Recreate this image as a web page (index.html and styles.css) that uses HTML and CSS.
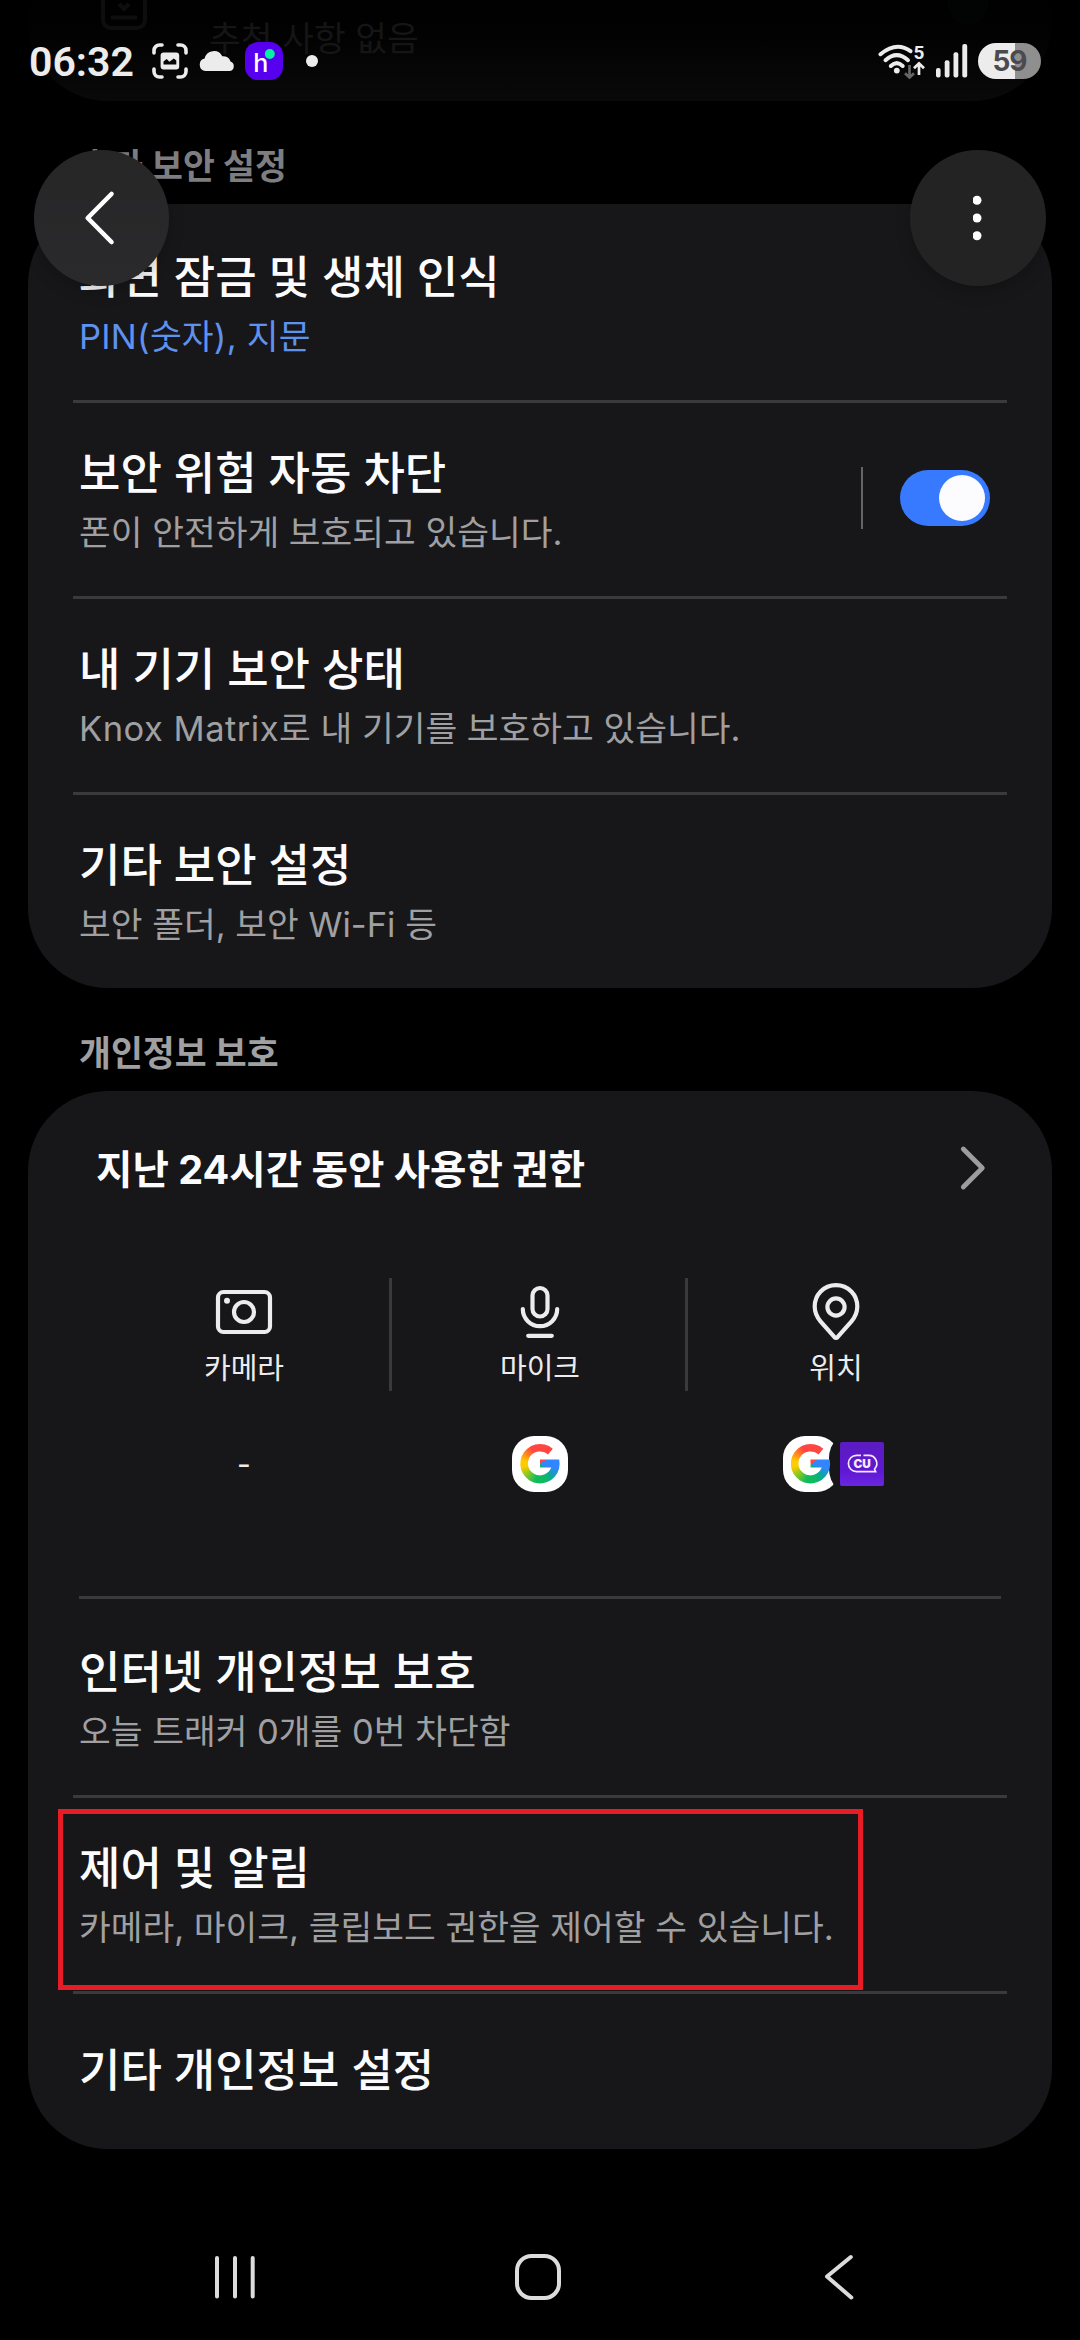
FILE: index.html
```html
<!DOCTYPE html>
<html lang="ko">
<head>
<meta charset="utf-8">
<title>보안 및 개인정보 보호</title>
<link rel="stylesheet" href="styles.css">
</head>
<body>
<div class="screen">
  <main class="content">
    <section class="card card-previous">
      <svg class="update-icon" width="46" height="32" viewBox="0 0 46 32"><path d="M2-10V20a8 8 0 0 0 8 8H36a8 8 0 0 0 8-8V-10M10 17.500H36M18 4l5 5 5-5" fill="none" stroke="#0e0e0f" stroke-width="4"/></svg>
      <p class="previous-note">추천 사항 없음</p>
      <span class="previous-status"></span>
    </section>

    <h2 class="section-title section-title-faded">추가 보안 설정</h2>
    <section class="card card-security">
      <div class="row">
        <div class="row-text"><h3 class="title">화면 잠금 및 생체 인식</h3><p class="summary summary-link">PIN(숫자), 지문</p></div>
      </div>
      <hr class="divider">
      <div class="row">
        <div class="row-text"><h3 class="title">보안 위험 자동 차단</h3><p class="summary">폰이 안전하게 보호되고 있습니다.</p></div>
        <div class="row-control"><span class="switch"><span class="knob"></span></span></div>
      </div>
      <hr class="divider">
      <div class="row">
        <div class="row-text"><h3 class="title">내 기기 보안 상태</h3><p class="summary"><span class="product">Knox Matrix</span>로 내 기기를 보호하고 있습니다.</p></div>
      </div>
      <hr class="divider">
      <div class="row">
        <div class="row-text"><h3 class="title">기타 보안 설정</h3><p class="summary">보안 폴더, 보안 Wi-Fi 등</p></div>
      </div>
    </section>

    <h2 class="section-title">개인정보 보호</h2>
    <section class="card card-privacy">
      <div class="usage-head">
        <h3 class="usage-title">지난 24시간 동안 사용한 권한</h3>
        <svg width="28" height="48" viewBox="0 0 28 48"><path d="M4.300 5L23.300 24L4.300 43" fill="none" stroke="#9d9d9f" stroke-width="4.800" stroke-linecap="round" stroke-linejoin="round"/></svg>
      </div>
      <div class="usage">
        <div class="usage-kind">
          <svg width="60" height="60" viewBox="0 0 60 60" class="line-icon"><rect x="4" y="10" width="52" height="40" rx="5.500"/><circle cx="30" cy="30" r="10"/><circle cx="13" cy="18.800" r="3" class="solid"/></svg>
          <span class="usage-label">카메라</span>
        </div>
        <div class="usage-kind">
          <svg width="60" height="60" viewBox="0 0 60 60" class="line-icon"><rect x="22.500" y="6" width="15" height="28.500" rx="7.500"/><path d="M12.800 27a17.200 17.200 0 0 0 34.400 0M18.200 53.800H41.800"/></svg>
          <span class="usage-label">마이크</span>
        </div>
        <div class="usage-kind">
          <svg width="60" height="60" viewBox="0 0 60 60" class="line-icon"><path d="M30 3.200C17.500 3.200 8.700 13 8.700 24.500C8.700 31 11.300 35.500 14.500 39.300L28.500 55.200Q30 56.800 31.500 55.200L45.500 39.300C48.700 35.500 51.300 31 51.300 24.500C51.300 13 42.500 3.200 30 3.200Z"/><circle cx="30" cy="25" r="8.600"/></svg>
          <span class="usage-label">위치</span>
        </div>
      </div>
      <div class="apps">
        <div class="app-cell"><span class="none">-</span></div>
        <div class="app-cell"><span class="app-google"><span class="g-mark"></span></span></div>
        <div class="app-cell app-cell-stack">
          <span class="app-google"><span class="g-mark"></span></span>
          <span class="app-cu-ring"><svg class="app-cu" width="44" height="44" viewBox="0 0 44 44">
            <defs><linearGradient id="cu" x2="0" y2="1"><stop offset="0" stop-color="#5b1cc0"/><stop offset=".65" stop-color="#5f18d2"/><stop offset="1" stop-color="#6a26e2"/></linearGradient></defs>
            <rect width="44" height="44" rx="2" fill="url(#cu)"/>
            <path d="M21 13.400H16.500a8.100 8.100 0 0 0 0 16.200H35.600L34.600 27A8.100 8.100 0 0 0 28.500 13.400H23.500" fill="none" stroke="#f6e8ff" stroke-width="1.700"/>
            <text x="22.200" y="26" text-anchor="middle" class="cu-text">CU</text>
          </svg></span>
        </div>
      </div>
      <hr class="divider divider-inset">
      <div class="row row-first">
        <div class="row-text"><h3 class="title">인터넷 개인정보 보호</h3><p class="summary">오늘 트래커 0개를 0번 차단함</p></div>
      </div>
      <hr class="divider">
      <div class="row row-marked">
        <div class="row-text"><h3 class="title">제어 및 알림</h3><p class="summary">카메라, 마이크, 클립보드 권한을 제어할 수 있습니다.</p></div>
        <span class="mark"></span>
      </div>
      <hr class="divider">
      <div class="row row-single">
        <div class="row-text"><h3 class="title">기타 개인정보 설정</h3></div>
      </div>
    </section>
  </main>

  <nav class="navbar">
    <svg width="46" height="50" viewBox="0 0 46 50"><path d="M5 6V44.500M23 6V44.500M40.700 6V44.500"/></svg>
    <svg class="nav-home" width="50" height="50" viewBox="0 0 50 50"><rect x="4" y="4" width="42" height="42" rx="14.500"/></svg>
    <svg width="34" height="50" viewBox="0 0 34 50"><path d="M29.800 5L6 24.500L30.300 45.500"/></svg>
  </nav>

  <header class="statusbar">
    <div class="status-left">
      <span class="clock">06:32</span>
      <svg class="capture" width="36" height="36" viewBox="0 0 36 36"><path d="M2 10V7.500A5.500 5.500 0 0 1 7.500 2H10M26 2H28.500A5.500 5.500 0 0 1 34 7.500V10M34 26V28.500A5.500 5.500 0 0 1 28.500 34H26M10 34H7.500A5.500 5.500 0 0 1 2 28.500V26" fill="none" stroke="#ececec" stroke-width="3.600" stroke-linecap="round"/><rect x="8.600" y="9.600" width="18.600" height="16.800" rx="3" fill="#ececec"/><path d="M11.500 21.500V18.500L14.700 16L17.400 18.700L21.800 15.400L24.300 17.500V21.500Z" fill="#050505"/></svg>
      <svg class="cloud" width="36" height="20" viewBox="0 0 36 20"><path d="M6.500 20A6.300 6.300 0 0 1 5.600 7.600A9.500 9.500 0 0 1 23.300 5.200A7.500 7.500 0 0 1 31.500 10.600A4.900 4.900 0 0 1 31 20Z" fill="#ececec"/></svg>
      <svg class="app-h" width="38" height="38" viewBox="0 0 38 38"><rect width="38" height="38" rx="13" fill="#5600ef"/><text x="8.200" y="29.800" class="h-text">h</text><circle cx="24.800" cy="12" r="5" fill="#00f5a0"/></svg>
      <span class="more-dot"></span>
    </div>
    <div class="status-right">
      <svg width="50" height="36" viewBox="0 0 50 36" class="wifi"><g fill="none" stroke="#ececec" stroke-width="4" stroke-linecap="round"><path d="M3.500 11.200Q19.500-2 33.500 8.200"/><path d="M8.500 17.200Q19.800 7 31 17.200"/><path d="M13.800 23Q19.800 17.300 25.700 23"/></g><circle cx="19.800" cy="27.600" r="2.900" fill="#ececec"/><text x="36.600" y="16" class="wifi-band">5</text><path d="M32.500 22V34M28 30.300L32.500 34.500L37 30.300" fill="none" stroke="#666" stroke-width="2.700"/><path d="M42 32V20.500M37 25.300L42 20.300L47 25.300" fill="none" stroke="#ececec" stroke-width="2.700"/></svg>
      <svg width="32" height="34" viewBox="0 0 32 34" class="signal"><g fill="#ececec"><rect x="0" y="24" width="4.600" height="9.500" rx="2"/><rect x="8.700" y="16.200" width="4.800" height="17.300" rx="2"/><rect x="17.500" y="8.200" width="4.800" height="25.300" rx="2"/><rect x="26.300" y="0" width="4.900" height="33.500" rx="2"/></g></svg>
      <span class="battery">59</span>
    </div>
  </header>

  <div class="round-button button-back"><svg width="40" height="60" viewBox="0 0 40 60"><path d="M29.500 6L5.700 30L29.500 54" fill="none" stroke="#fff" stroke-width="4.600" stroke-linecap="round" stroke-linejoin="round"/></svg></div>
  <div class="round-button button-more"><svg width="10" height="46" viewBox="0 0 10 46" fill="#fff"><circle cx="4" cy="5.300" r="4.500"/><circle cx="4" cy="23" r="4.500"/><circle cx="4" cy="40.700" r="4.500"/></svg></div>
</div>
</body>
</html>
```
FILE: styles.css
```css
* { box-sizing: border-box; margin: 0; padding: 0; }

body {
  width: 1080px;
  height: 2340px;
  overflow: hidden;
  background: #000;
  color: #fcfcfe;
  font-family: Inter, "Noto Sans CJK KR", sans-serif;
}

svg { display: block; overflow: hidden; flex: none; }

.screen {
  position: relative;
  display: flex;
  flex-direction: column;
  width: 1080px;
  height: 2340px;
  overflow: hidden;
}

.content { display: flex; flex-direction: column; padding: 0 28px; }

/* Cards */
.card { background: #171719; border-radius: 80px; }

.card-previous {
  display: flex;
  align-items: flex-start;
  height: 101px;
  padding: 0 64px 0 73px;
  border-radius: 0 0 80px 80px;
  background: linear-gradient(#000 0, #020202 35%, #09090a 100%);
}
.previous-note { padding-left: 62px; font-size: 34.500px; line-height: 77px; color: #151516; }
.previous-status { width: 40px; height: 25px; margin-left: auto; border-radius: 0 0 20px 20px; background: #010403; }

.card-security { height: 784px; padding-top: 3px; }
.card-privacy { height: 1058px; }

.section-title {
  height: 103px;
  padding: 40px 51px 0;
  font-size: 34.700px;
  line-height: 50px;
  font-weight: 700;
  color: #a0a0a2;
}
.section-title-faded { color: #7e7e80; }

/* List rows */
.row { display: flex; justify-content: space-between; height: 193px; padding: 40px 62px 0 51px; }
.title { font-size: 45px; line-height: 62px; font-weight: 500; }
.summary { font-size: 34.500px; line-height: 55px; color: #a0a0a2; }
.summary-link { color: #5f91ee; letter-spacing: .25px; }
.product { letter-spacing: .5px; }
.row-control {
  display: flex;
  align-items: center;
  justify-content: flex-end;
  width: 129px;
  height: 62px;
  margin-top: 24px;
  border-left: 2px solid #646467;
}
.switch { display: flex; justify-content: flex-end; width: 90px; height: 56px; padding: 5px; border-radius: 28px; background: #387aff; }
.knob { width: 46px; height: 46px; border-radius: 50%; background: #fcfcff; }

.divider { height: 3px; margin: 0 45px; border: 0; background: #3a3a3c; }
.divider-inset { margin: 0 51px; }

.row-first { height: 196px; padding-top: 43px; }
.row-marked { position: relative; }
.row-single { height: 155px; padding-top: 46px; }

/* Highlight frame drawn over the row */
.mark { position: absolute; left: 30px; top: 11px; width: 805px; height: 181px; border: 5px solid #e81c24; }

/* Permission usage */
.usage-head { display: flex; align-items: center; justify-content: space-between; height: 154px; padding: 0 65px 0 68px; }
.usage-title { padding-top: 3px; font-size: 39.600px; line-height: 56px; font-weight: 700; }
.usage { display: grid; grid-template-columns: repeat(3, 296px); justify-content: center; height: 113px; margin-top: 33px; }
.usage-kind { display: flex; flex-direction: column; align-items: center; padding: 4px 0 0 3px; border-right: 3px solid #3a3a3c; }
.usage-kind:last-child { border-color: transparent; }
.usage-label { margin-top: 6px; font-size: 29px; line-height: 42px; color: #ececee; }
.line-icon { fill: none; stroke: #ececee; stroke-width: 4.200; stroke-linecap: round; stroke-linejoin: round; }
.line-icon .solid { fill: #ececee; stroke: none; }

.apps { display: grid; grid-template-columns: repeat(3, 296px); justify-content: center; height: 205px; padding-top: 39px; }
.app-cell { display: flex; align-items: center; justify-content: center; height: 67px; }
.app-cell-stack { padding-left: 6px; }
.none { font-size: 30px; line-height: 40px; color: #ececee; }
.app-google { display: flex; align-items: center; justify-content: center; width: 56px; height: 56px; border-radius: 22px; background: #fff; }
.g-mark {
  width: 40px;
  height: 40px;
  background: conic-gradient(from 0deg, #ff4641 0 50deg, #3186ff 60deg 105deg, #0ea5a0 135deg, #0ebc5f 165deg 195deg, #8cc820 232deg, #ffcc00 262deg 280deg, #ff8a1c 305deg, #ff4641 332deg);
  clip-path: path("M32.800 5.300A19.700 19.700 0 1 0 39.200 16H20V24H31.200A12 12 0 1 1 28 11Z");
}
.app-cu-ring { display: flex; align-items: center; justify-content: center; width: 67px; height: 67px; margin-left: -10px; border-radius: 28px; background: #171719; }
.cu-text { font: 900 11.800px Inter, sans-serif; fill: #f6e8ff; }

/* Navigation bar */
.navbar { display: flex; justify-content: space-between; height: 191px; padding: 103px 225px 0 212px; fill: none; stroke: #dcdcdc; stroke-width: 4; stroke-linecap: round; stroke-linejoin: round; }
.nav-home { margin-right: 4px; }

/* Status bar floats over the scrolled list */
.statusbar { position: absolute; top: 0; left: 0; display: flex; justify-content: space-between; width: 1080px; height: 122px; padding: 0 39px 0 29px; }
.status-left, .status-right { display: flex; align-items: center; }
.clock { width: 123px; padding-top: 2px; font: 600 41px/48px Roboto, sans-serif; color: #ececec; white-space: nowrap; }
.cloud { margin-left: 11px; }
.app-h { margin-left: 10px; }
.h-text { font: 500 25px Inter, sans-serif; fill: #fff; }
.more-dot { width: 12px; height: 12px; margin-left: 23px; border-radius: 50%; background: #ececec; }
.wifi-band { font: 700 19px Roboto, sans-serif; fill: #ececec; }
.signal { margin-left: 9px; }
.battery {
  width: 63px;
  height: 36px;
  margin-left: 10px;
  border-radius: 18px;
  background: linear-gradient(90deg, #ececec 37px, #8f8f8f 37px);
  font: 700 28px/37px Inter, sans-serif;
  letter-spacing: -1px;
  text-align: center;
  color: #4b4b4f;
}

/* Floating buttons */
.round-button { position: absolute; top: 150px; display: flex; align-items: center; justify-content: center; width: 136px; height: 136px; border-radius: 50%; box-shadow: 0 6px 16px rgba(0, 0, 0, .2); }
.button-back { left: 34px; width: 135px; background: linear-gradient(#262627, #2a2a2c); }
.button-more { left: 910px; background: #232323; }
```
